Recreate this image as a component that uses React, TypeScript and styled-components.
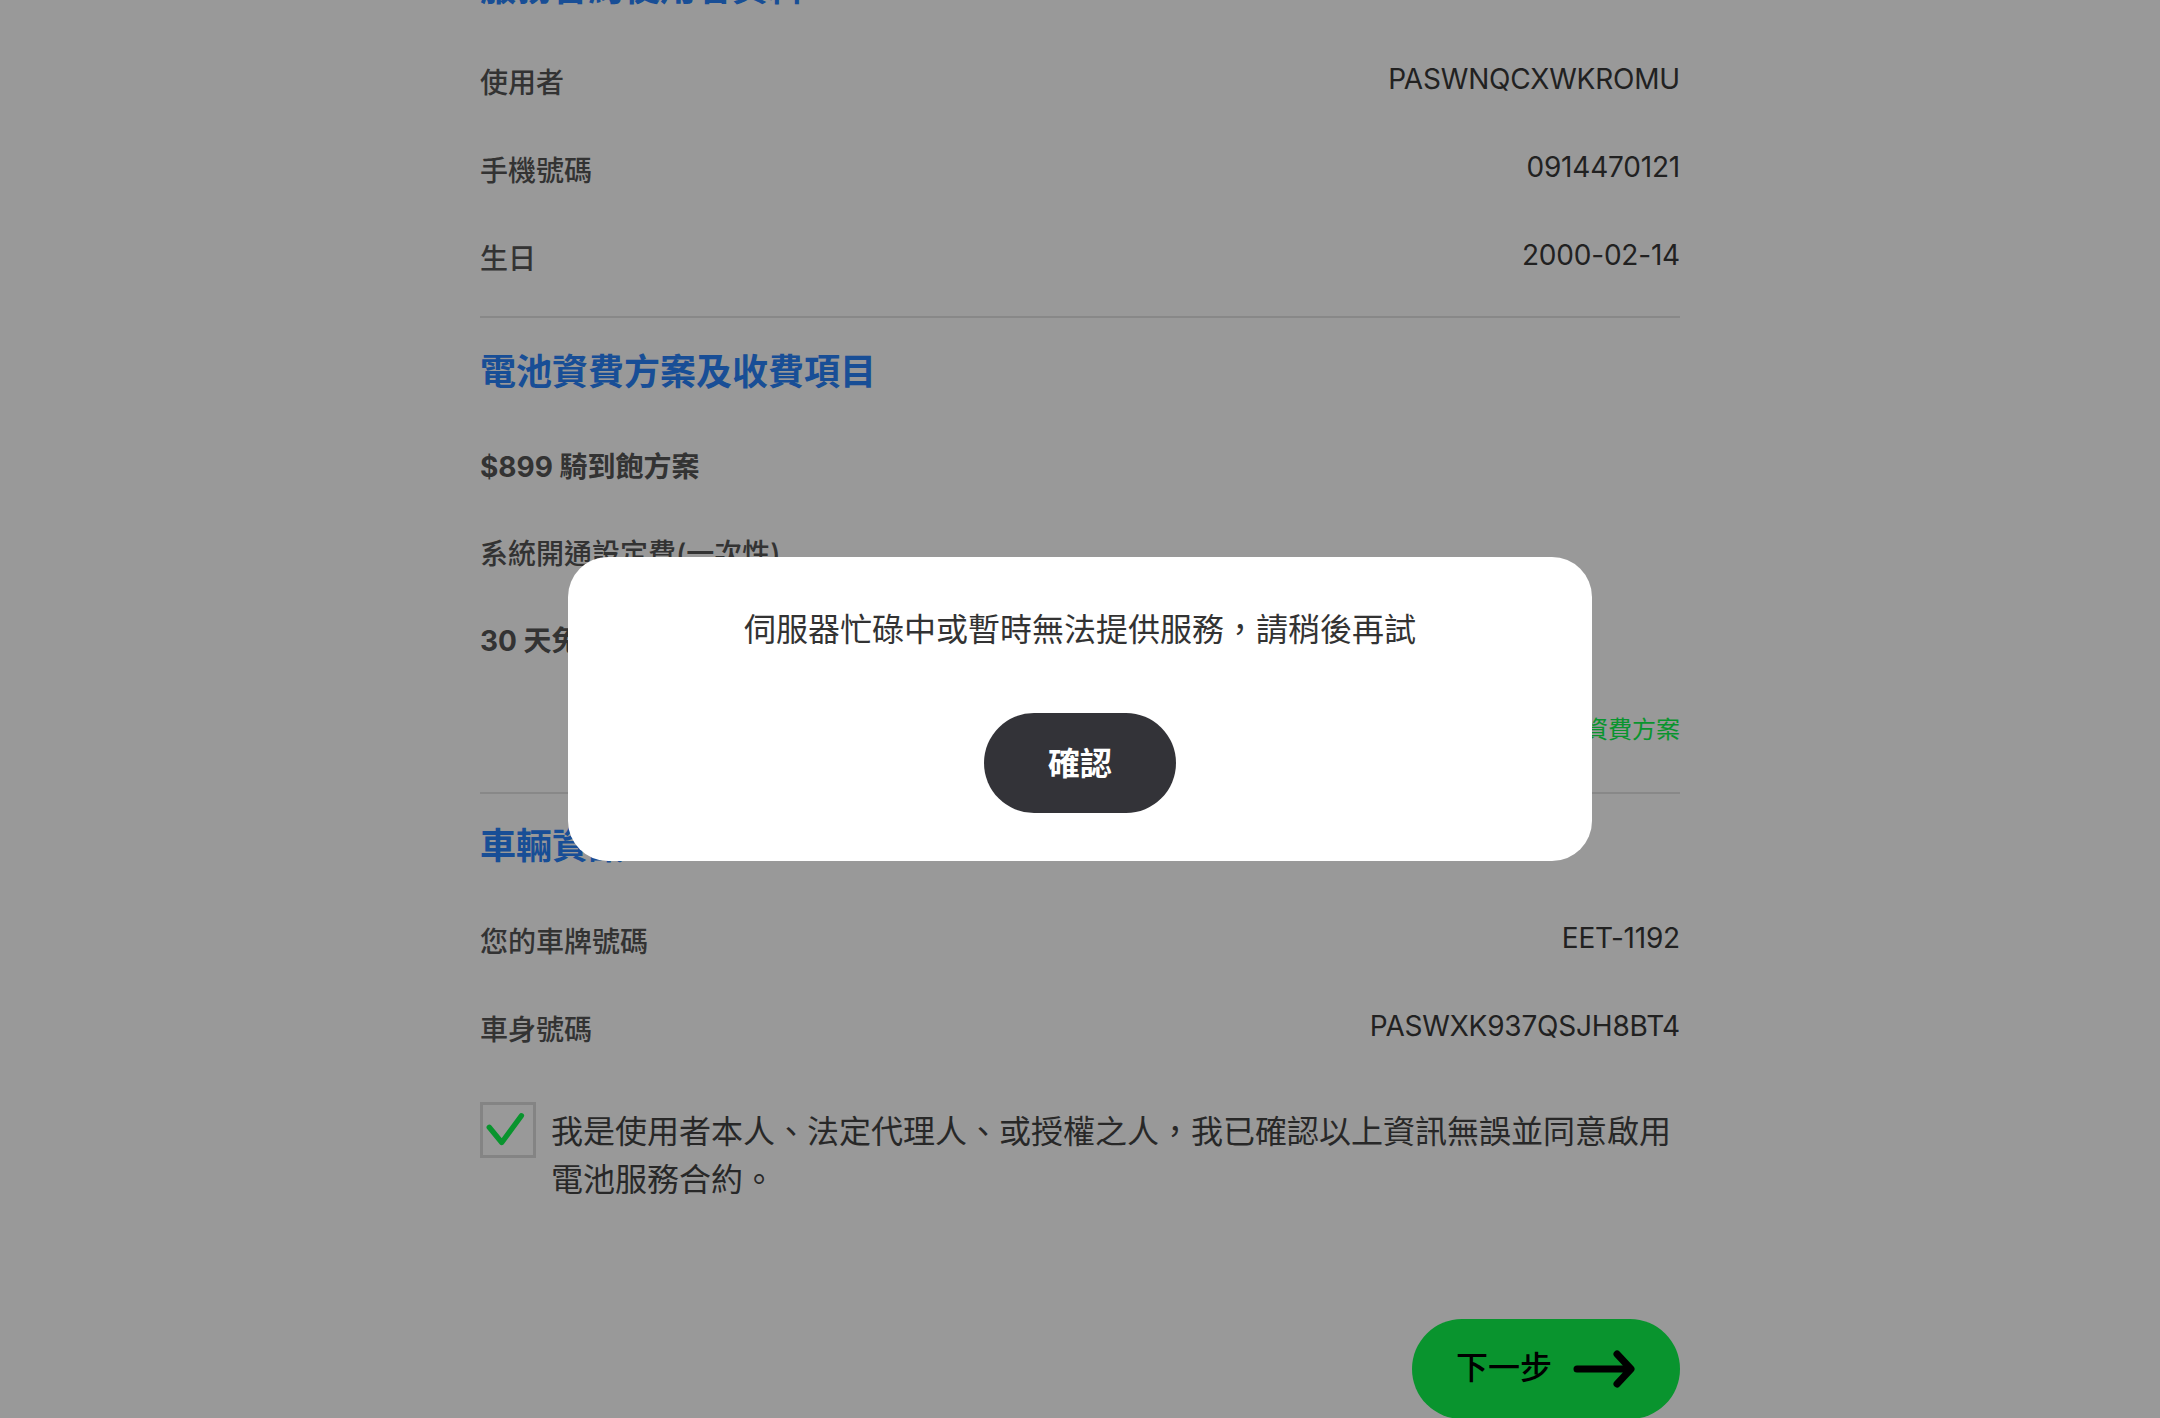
import React from "react";
import styled, { createGlobalStyle } from "styled-components";

const GlobalStyle = createGlobalStyle`
  html, body {
    margin: 0;
    padding: 0;
    background: #ffffff;
    overflow: hidden;
  }
  body {
    font-family: Inter, "Noto Sans CJK TC", "Noto Sans", sans-serif;
  }
`;

const Page = styled.main`
  width: 1200px;
  margin: -39px auto 0;
  display: flex;
  flex-direction: column;
`;

const Section = styled.section`
  display: flex;
  flex-direction: column;
`;

const Heading = styled.h2<{ $after?: number }>`
  margin: 0 0 ${(p) => p.$after ?? 54}px;
  font-size: 36px;
  line-height: 48px;
  font-weight: 700;
  color: #2882fa;
  font-family: "Noto Sans CJK TC", sans-serif;
`;

const Rows = styled.div<{ $gap?: number }>`
  display: flex;
  flex-direction: column;
  gap: ${(p) => p.$gap ?? 48}px;
`;

const Row = styled.div<{ $end?: boolean }>`
  height: 40px;
  display: flex;
  align-items: center;
  justify-content: ${(p) => (p.$end ? "flex-end" : "space-between")};
`;

const Label = styled.span<{ $bold?: boolean }>`
  font-size: 28px;
  line-height: 40px;
  font-weight: ${(p) => (p.$bold ? 700 : 500)};
  color: #555555;
`;

const Value = styled.span`
  font-family: Inter, sans-serif;
  font-size: 28px;
  line-height: 40px;
  letter-spacing: -0.2px;
  color: #383838;
  transform: translateY(-4px);
`;

const PlanLink = styled.a`
  font-size: 24px;
  line-height: 40px;
  color: #0ff74d;
  text-decoration: none;
  font-family: "Noto Sans CJK TC", sans-serif;
`;

const Divider = styled.hr<{ $top: number; $bottom: number }>`
  margin: ${(p) => p.$top}px 0 ${(p) => p.$bottom}px;
  height: 2px;
  border: 0;
  background: #e3e3e3;
`;

const Agreement = styled.label`
  margin-top: 52px;
  display: flex;
  align-items: flex-start;
  gap: 15px;
`;

const CheckBox = styled.span`
  flex: none;
  width: 56px;
  height: 56px;
  box-sizing: border-box;
  border: 3px solid #dcdcdc;
  display: flex;
  align-items: center;
  justify-content: center;
  background: #ffffff;
`;

const AgreementText = styled.span`
  margin-top: 3px;
  font-size: 32px;
  line-height: 48px;
  color: #444444;
  font-family: "Noto Sans CJK TC", sans-serif;
`;

const Footer = styled.div`
  margin-top: 118px;
  display: flex;
  justify-content: flex-end;
`;

const NextButton = styled.button`
  height: 100px;
  padding: 0 45px 0 44px;
  border: 0;
  border-radius: 50px;
  background: #0ff74d;
  display: flex;
  align-items: center;
  gap: 21px;
  font-family: "Noto Sans CJK TC", sans-serif;
  font-size: 32px;
  line-height: 1;
  font-weight: 500;
  color: #000000;
`;

const ButtonText = styled.span`
  display: block;
  transform: translateY(-4px);
`;

const Overlay = styled.div`
  position: fixed;
  inset: 0;
  background: rgba(0, 0, 0, 0.4);
  display: flex;
  align-items: center;
  justify-content: center;
`;

const Modal = styled.div`
  width: 1024px;
  box-sizing: border-box;
  padding: 46px 0 48px;
  background: #ffffff;
  border-radius: 40px;
  display: flex;
  flex-direction: column;
  align-items: center;
`;

const ModalText = styled.p`
  margin: 0;
  font-size: 32px;
  line-height: 48px;
  color: #333333;
  font-family: "Noto Sans CJK TC", sans-serif;
`;

const ConfirmButton = styled.button`
  margin-top: 62px;
  width: 192px;
  height: 100px;
  padding: 0 0 4px;
  border: 0;
  border-radius: 50px;
  background: #333338;
  color: #ffffff;
  font-family: "Noto Sans CJK TC", sans-serif;
  font-size: 32px;
  font-weight: 700;
`;

const userRows = [
  ["使用者", "PASWNQCXWKROMU"],
  ["手機號碼", "0914470121"],
  ["生日", "2000-02-14"],
];

const vehicleRows = [
  ["您的車牌號碼", "EET-1192"],
  ["車身號碼", "PASWXK937QSJH8BT4"],
];

export default function App() {
  return (
    <>
      <GlobalStyle />
      <Page>
        <Section>
          <Heading>服務合約使用者資料</Heading>
          <Rows>
            {userRows.map(([l, v]) => (
              <Row key={l}>
                <Label>{l}</Label>
                <Value>{v}</Value>
              </Row>
            ))}
          </Rows>
          <Divider $top={37} $bottom={27} />
        </Section>
        <Section>
          <Heading>電池資費方案及收費項目</Heading>
          <Rows $gap={47}>
            <Row>
              <Label $bold>$899 騎到飽方案</Label>
            </Row>
            <Row>
              <Label>系統開通設定費(一次性)</Label>
            </Row>
            <Row>
              <Label $bold>30 天免費體驗</Label>
            </Row>
            <Row $end>
              <PlanLink>查看資費方案</PlanLink>
            </Row>
          </Rows>
          <Divider $top={44} $bottom={25} />
        </Section>
        <Section>
          <Heading $after={55}>車輛資訊</Heading>
          <Rows>
            {vehicleRows.map(([l, v]) => (
              <Row key={l}>
                <Label>{l}</Label>
                <Value>{v}</Value>
              </Row>
            ))}
          </Rows>
        </Section>
        <Agreement>
          <CheckBox>
            <svg width="56" height="56" viewBox="0 0 56 56" fill="none">
              <path
                d="M7 25 L21 42 L43 12"
                stroke="#0ff74d"
                strokeWidth="6"
                strokeLinecap="round"
                strokeLinejoin="round"
              />
            </svg>
          </CheckBox>
          <AgreementText>
            我是使用者本人、法定代理人、或授權之人，我已確認以上資訊無誤並同意啟用電池服務合約。
          </AgreementText>
        </Agreement>
        <Footer>
          <NextButton>
            <ButtonText>下一步</ButtonText>
            <svg width="62" height="38" viewBox="0 0 62 38" fill="none">
              <path
                d="M4 19 H57 M44 4 L58 19 L44 34"
                stroke="#000"
                strokeWidth="7"
                strokeLinecap="round"
                strokeLinejoin="round"
              />
            </svg>
          </NextButton>
        </Footer>
      </Page>
      <Overlay>
        <Modal>
          <ModalText>伺服器忙碌中或暫時無法提供服務，請稍後再試</ModalText>
          <ConfirmButton>確認</ConfirmButton>
        </Modal>
      </Overlay>
    </>
  );
}
